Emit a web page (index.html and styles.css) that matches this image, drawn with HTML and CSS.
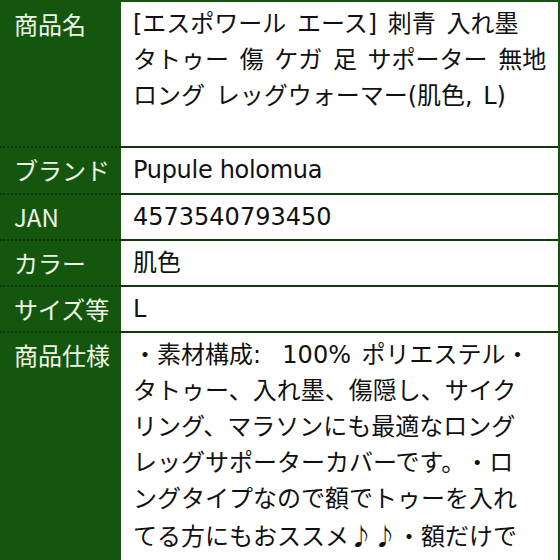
FILE: index.html
```html
<!DOCTYPE html>
<html lang="ja">
<head>
<meta charset="utf-8">
<title>商品情報</title>
<link rel="stylesheet" href="styles.css">
</head>
<body>
<div class="spec">
  <div class="row r1">
    <div class="th">商品名</div>
    <div class="td">[エスポワール エース] 刺青 入れ墨<br>タトゥー 傷 ケガ 足 サポーター 無地<br>ロング レッグウォーマー(肌色, L)</div>
  </div>
  <div class="row r2">
    <div class="th">ブランド</div>
    <div class="td tight">Pupule holomua</div>
  </div>
  <div class="row">
    <div class="th">JAN</div>
    <div class="td">4573540793450</div>
  </div>
  <div class="row">
    <div class="th">カラー</div>
    <div class="td">肌色</div>
  </div>
  <div class="row">
    <div class="th">サイズ等</div>
    <div class="td">L</div>
  </div>
  <div class="row r6">
    <div class="th">商品仕様</div>
    <div class="td">・素材構成:&nbsp; 100% ポリエステル・<br>タトゥー、入れ墨、傷隠し、サイク<br>リング、マラソンにも最適なロング<br>レッグサポーターカバーです。・ロ<br>ングタイプなので額でトゥーを入れ<br>てる方にもおススメ<span class="note">♪♪</span>・額だけで</div>
  </div>
</div>
</body>
</html>
```
FILE: styles.css
```css
html, body {
  margin: 0;
  padding: 0;
  background: #ffffff;
}
.spec {
  width: 560px;
  height: 560px;
  box-sizing: border-box;
  padding: 2px 2px 0 0;
  background: #14560e;
  overflow: hidden;
  font-family: "DejaVu Sans", "Noto Sans CJK JP", sans-serif;
  font-size: 24px;
  line-height: 36px;
  word-spacing: 3px;
  text-spacing-trim: space-all;
  display: flex;
  flex-direction: column;
}
.row {
  display: grid;
  grid-template-columns: 121px 1fr;
  height: 46px;
  flex: none;
}
.r1 { height: 146px; }
.r2 { height: 47px; }
.r6 { flex: 1; height: auto; }
.th {
  color: #eef6e6;
  padding: 4px 0 0 14px;
  border-bottom: 2px dotted #0c3808;
  font-family: "Noto Sans CJK JP", "DejaVu Sans", sans-serif;
  word-spacing: 0;
}
.td {
  background: #ffffff;
  color: #111111;
  padding: 4px 0 0 12px;
  border-bottom: 2px solid #123a0e;
  overflow: hidden;
  white-space: nowrap;
}
.tight {
  word-spacing: 0;
  letter-spacing: -0.3px;
}
.note {
  font-family: "Noto Sans CJK JP", sans-serif;
}
.r6 .th, .r6 .td { border-bottom: none; }
```
